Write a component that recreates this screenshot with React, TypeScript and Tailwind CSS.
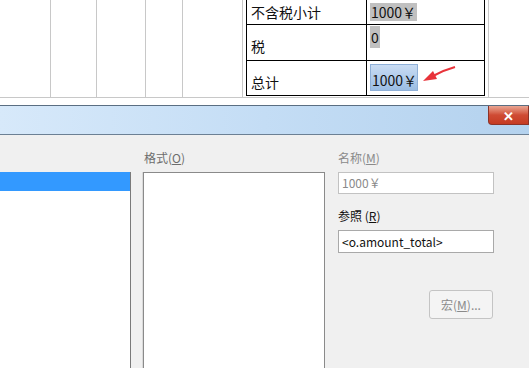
export default function App() {
  return (
    <div
      className="relative w-[529px] h-[368px] overflow-hidden bg-white"
      style={{ fontFamily: '"Noto Sans CJK SC", "Noto Sans", sans-serif' }}
    >
      {/* Document table area */}
      <div className="flex h-[98px] border-b border-[#c8c8c8]">
        <div className="w-[51px] border-r border-[#c8c8c8]" />
        <div className="w-[46px] border-r border-[#c8c8c8]" />
        <div className="w-[49px] border-r border-[#c8c8c8]" />
        <div className="w-[37px] border-r border-[#c8c8c8]" />
        <div className="w-[60px] border-r border-[#c8c8c8]" />
        <div className="w-[3px]" />
        <div className="w-[239px] h-[96px] border border-black border-t-0 grid grid-cols-[120px_1fr] grid-rows-[25px_36px_34px] text-[14px] text-[#111] leading-none">
          <div className="border-r border-b border-black pl-[4px] flex items-center">不含税小计</div>
          <div className="border-b border-black pl-[3px] flex items-center">
            <span className="bg-[#c0c0c0] px-[1px] py-[2px]">1000￥</span>
          </div>
          <div className="border-r border-b border-black pl-[4px] flex items-end pb-[7px]">税</div>
          <div className="border-b border-black pl-[3px] pt-[5px]">
            <span className="bg-[#c0c0c0] px-[1px] py-[1px]">0</span>
          </div>
          <div className="border-r border-black pl-[4px] flex items-end pb-[6px]">总计</div>
          <div className="relative pl-[3px] pt-[3px]">
            <span className="inline-flex items-end h-[27px] w-[48px] pb-[3px] px-[1px] bg-gradient-to-b from-[#c9dcf3] to-[#9bbde3] border border-[#8fb0d8]">
              1000￥
            </span>
            <svg className="absolute left-[55px] top-[5px]" width="34" height="18" viewBox="0 0 34 18">
              <path d="M33 1 Q22 4 11 10" stroke="#e8333a" strokeWidth="2" fill="none" />
              <path d="M1 15 L11 5 L15 13 Z" fill="#e8333a" />
            </svg>
          </div>
        </div>
        <div className="w-[4px] border-r border-[#c8c8c8]" />
      </div>

      {/* Dialog */}
      <div className="mt-[7px] border-t border-[#5a6e82]">
        <div className="relative h-[29px] bg-gradient-to-r from-[#d7e9fa] via-[#c4ddf5] to-[#b4d2ee] border-b border-[#6c8094]">
          <div className="absolute right-0 top-0 w-[41px] h-[19px] rounded-bl-[4px] border border-t-0 border-[#8c3328] bg-gradient-to-b from-[#e8a593] via-[#cf4b34] to-[#c53b22] flex items-center justify-center text-white text-[13px] font-bold leading-none">
          ✕
          </div>
        </div>
        <div className="h-[233px] bg-[#f0f0f0] flex text-[12px] leading-none">
          {/* left list */}
          <div className="w-[131px] pt-[37px]">
            <div className="h-full bg-white border-r border-[#7a7a7a]">
              <div className="h-[19px] bg-[#3399ff]" />
            </div>
          </div>
          <div className="w-[12px] bg-[#f0f0f0] mt-[37px] border-r border-[#dadada]" />
          {/* format list */}
          <div className="w-[182px] flex flex-col">
            <div className="h-[37px] flex items-center text-[#6d6d6d] pl-[1px] pt-[9px]">
              格式(<span className="underline">O</span>)
            </div>
            <div className="flex-1 bg-white border border-[#8a8a8a] border-b-0" />
          </div>
          {/* right column */}
          <div className="pl-[13px] w-[170px] flex flex-col">
            <div className="h-[37px] flex items-center text-[#8a8a8a] pt-[9px]">
              名称(<span className="underline">M</span>)
            </div>
            <div className="h-[22px] w-[156px] bg-white border border-[#c2c2c2] flex items-center pl-[3px] text-[#8a8a8a]">
              1000￥
            </div>
            <div className="h-[36px] flex items-center text-[#111] pt-[8px]">
              参照 (<span className="underline">R</span>)
            </div>
            <div className="h-[23px] w-[156px] bg-white border border-[#a9a9a9] flex items-center pl-[3px] text-[#111]">
              &lt;o.amount_total&gt;
            </div>
            <div className="mt-[37px] ml-[91px] h-[29px] w-[64px] border border-[#c4c4c4] rounded-[3px] bg-[#f4f4f4] flex items-center justify-center text-[#8a8a8a]">
              宏(<span className="underline">M</span>)...
            </div>
          </div>
        </div>
      </div>
    </div>
  );
}
